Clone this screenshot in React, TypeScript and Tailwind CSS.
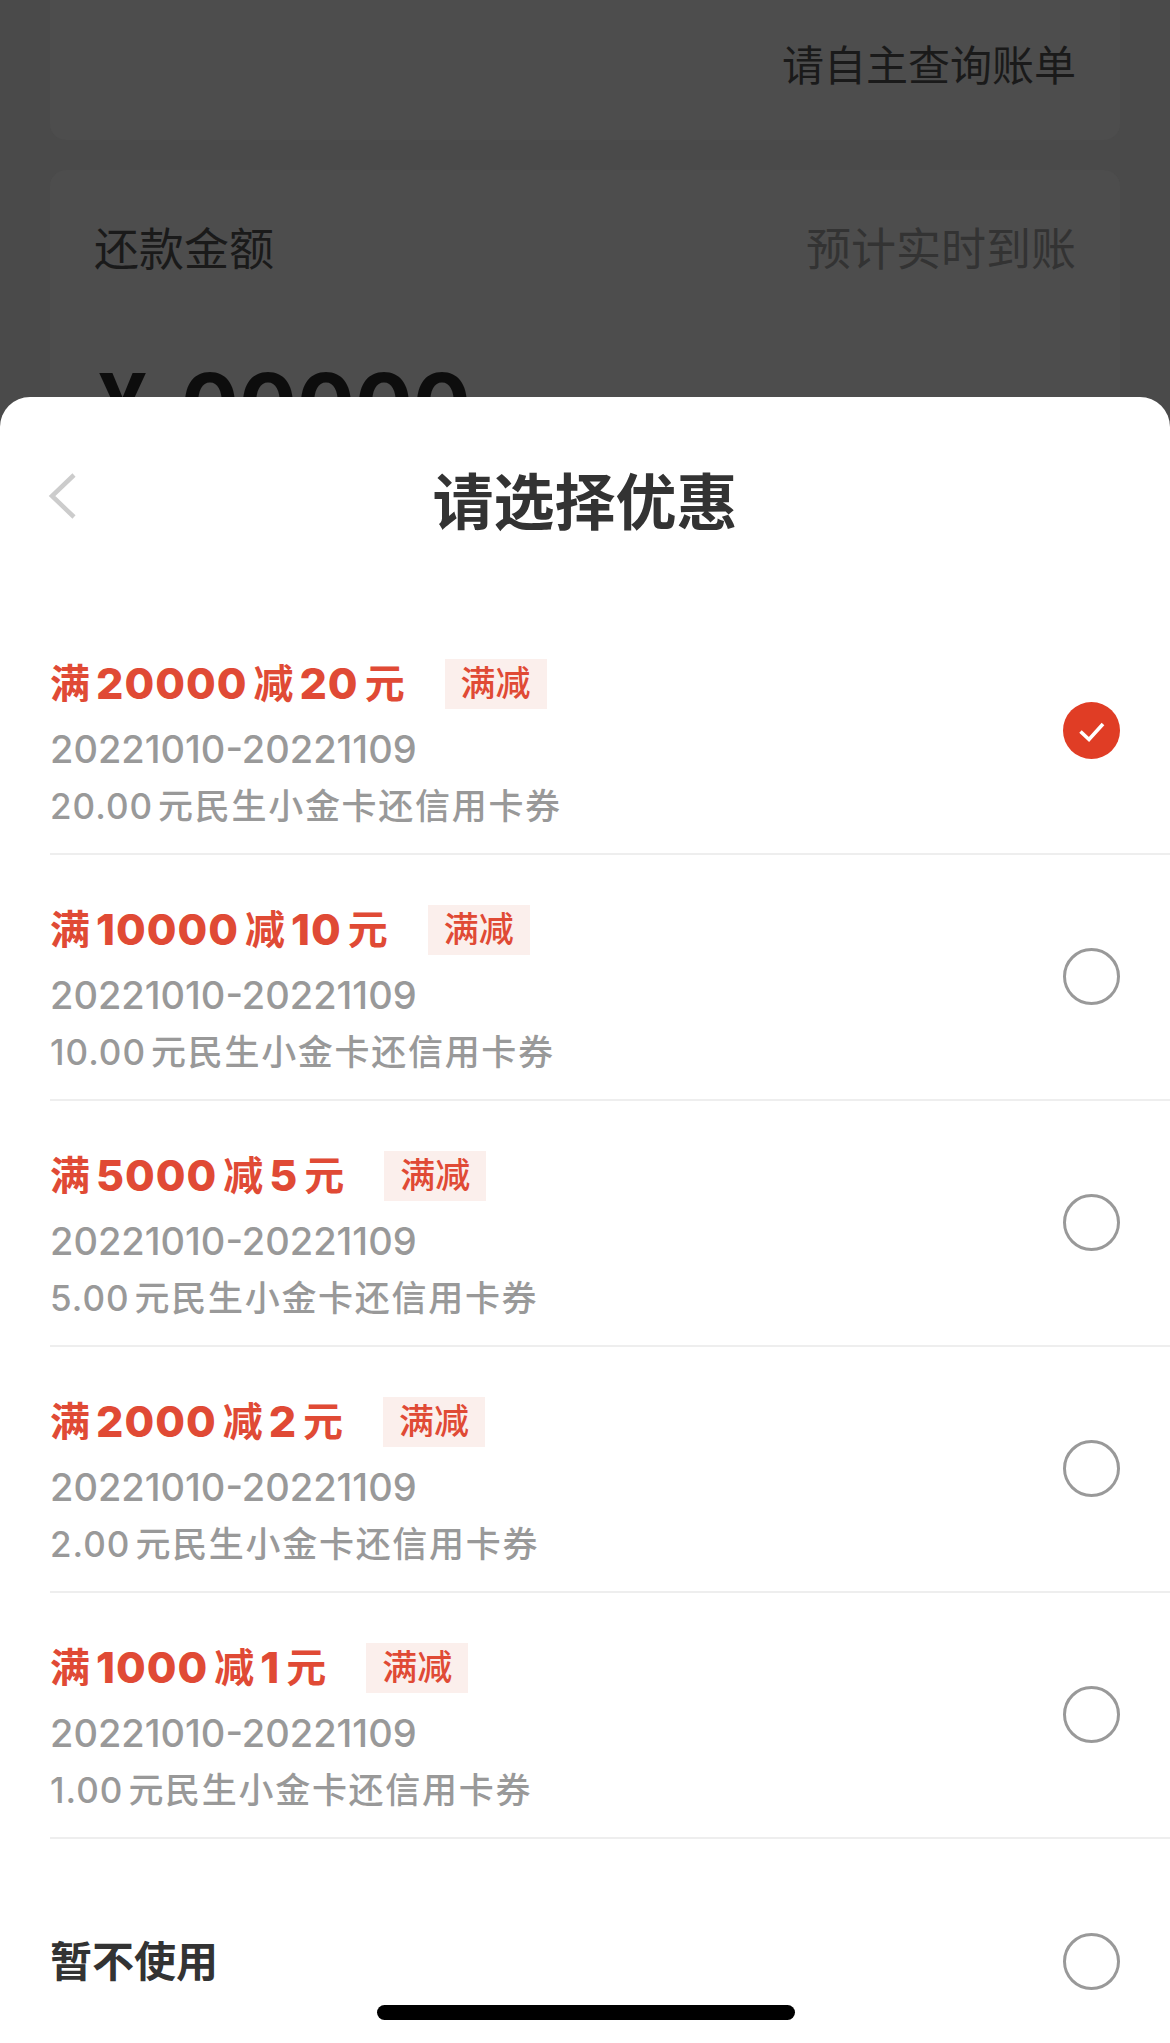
import React from 'react';

const FONT = "font-['Inter','Noto_Sans_CJK_SC',sans-serif]";

interface Coupon {
  threshold: string;
  discount: string;
  amount: string;
  selected?: boolean;
}

const coupons: Coupon[] = [
  { threshold: '20000', discount: '20', amount: '20.00', selected: true },
  { threshold: '10000', discount: '10', amount: '10.00' },
  { threshold: '5000', discount: '5', amount: '5.00' },
  { threshold: '2000', discount: '2', amount: '2.00' },
  { threshold: '1000', discount: '1', amount: '1.00' },
];

const Radio = ({ selected }: { selected?: boolean }) =>
  selected ? (
    <svg viewBox="0 0 57 57" className="w-[57px] h-[57px] shrink-0">
      <circle cx="28.5" cy="28.5" r="28.5" fill="#e03d25" />
      <path d="M17.5 29.5l8.5 8 14-15.5" fill="none" stroke="#fff" strokeWidth="3.6" />
    </svg>
  ) : (
    <div className="w-[57px] h-[57px] shrink-0 rounded-full border-[3px] border-[#999999]" />
  );

const CouponRow = ({ coupon }: { coupon: Coupon }) => (
  <div className="h-[246px] ml-[50px] pr-[50px] pb-[2px] border-b-2 border-[#eeeeee] flex items-center justify-between">
    <div className="flex flex-col pt-[27px]">
      <div className="flex items-center h-[50px] text-[#e04a35]">
        <div className="flex items-center gap-[6px] text-[40px] font-semibold">
          <span>满</span>
          <span className="text-[43px] font-extrabold tracking-[1px]">{coupon.threshold}</span>
          <span>减</span>
          <span className="text-[43px] font-extrabold tracking-[1px]">{coupon.discount}</span>
          <span>元</span>
        </div>
        <span className="ml-[40px] h-[50px] w-[102px] bg-[#fbefec] flex items-center justify-center text-[35px] font-medium">满减</span>
      </div>
      <div className="mt-[17px] text-[38px] leading-[46px] text-[#999999] font-medium">20221010-20221109</div>
      <div className="mt-[11px] text-[35px] leading-[46px] text-[#999999] font-medium flex items-center gap-[5px]">
        <span className="tracking-[1px]">{coupon.amount}</span>
        <span className="tracking-[1.7px]">元民生小金卡还信用卡券</span>
      </div>
    </div>
    <Radio selected={coupon.selected} />
  </div>
);

export default function App() {
  return (
    <div className={`w-[1170px] h-[2043px] bg-[#4a4a4a] flex flex-col overflow-hidden ${FONT}`}>
      {/* dimmed page behind the sheet */}
      <div className="h-[397px] shrink-0 overflow-hidden px-[50px] flex flex-col">
        <div className="h-[140px] shrink-0 bg-[#4d4d4d] rounded-b-[16px] pt-[40px] px-[44px] flex justify-end">
          <span className="text-[42px] leading-[52px] text-[#1a1a1a]">请自主查询账单</span>
        </div>
        <div className="mt-[30px] shrink-0 h-[400px] bg-[#4d4d4d] rounded-t-[16px] px-[44px] pt-[52px]">
          <div className="flex justify-between items-center text-[45px] leading-[56px]">
            <span className="text-[#1a1a1a]">还款金额</span>
            <span className="text-[#333333]">预计实时到账</span>
          </div>
          <div className="mt-[72px] flex gap-[34px] pl-[4px] text-[86px] leading-[110px] font-bold text-[#0d0d0d]">
            <span>¥</span>
            <span>00000</span>
          </div>
        </div>
      </div>

      {/* coupon sheet */}
      <div className="flex-1 bg-white rounded-t-[30px] relative">
        <div className="h-[212px] relative flex justify-center pt-[73px]">
          <svg viewBox="0 0 30 46" className="absolute left-[47px] top-[76px] w-[30px] h-[46px]">
            <path d="M27 2L5 23l22 21" fill="none" stroke="#cccccc" strokeWidth="4.5" />
          </svg>
          <h1 className="text-[61px] leading-[66px] font-semibold text-[#333333]">请选择优惠</h1>
        </div>
        {coupons.map((c) => (
          <CouponRow key={c.threshold} coupon={c} />
        ))}
        <div className="ml-[50px] pr-[50px] mt-[93px] h-[58px] flex items-center justify-between">
          <span className="text-[42px] font-semibold text-[#333333]">暂不使用</span>
          <Radio />
        </div>
        {/* home indicator */}
        <div className="absolute left-[377px] top-[1608px] w-[418px] h-[15px] rounded-[8px] bg-black" />
      </div>
    </div>
  );
}
